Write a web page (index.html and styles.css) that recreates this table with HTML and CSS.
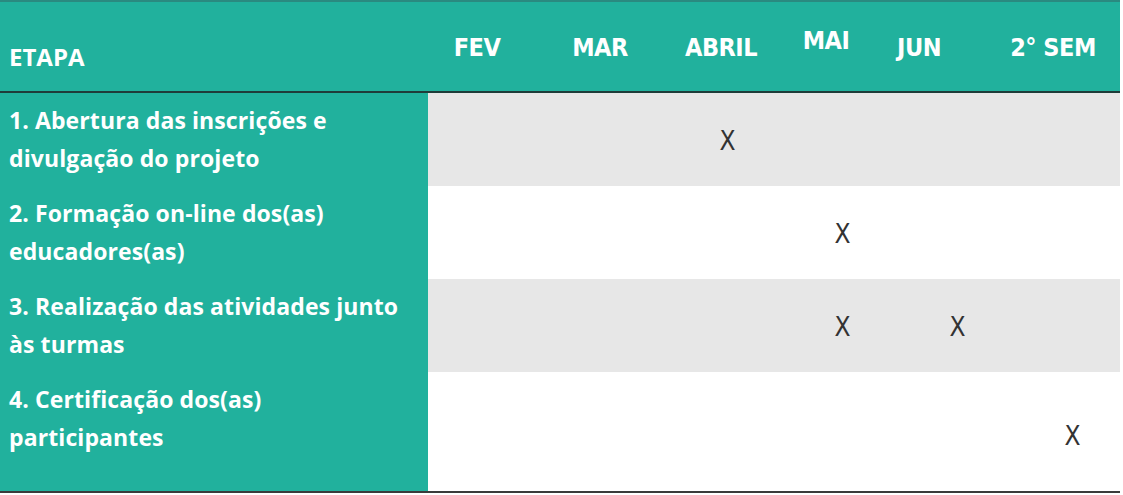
FILE: index.html
```html
<!DOCTYPE html>
<html lang="pt-BR">
<head>
<meta charset="utf-8">
<title>Cronograma</title>
<link rel="stylesheet" href="styles.css">
</head>
<body>
<div class="schedule">
  <div class="head">
    <div class="head-stage">ETAPA</div>
    <div class="month">FEV</div>
    <div class="month">MAR</div>
    <div class="month">ABRIL</div>
    <div class="month month-raised">MAI</div>
    <div class="month">JUN</div>
    <div class="month month-last">2° SEM</div>
  </div>
  <div class="row row-alt">
    <div class="stage">1. Abertura das inscrições e<br>divulgação do projeto</div>
    <div class="cell"></div>
    <div class="cell"></div>
    <div class="cell">X</div>
    <div class="cell"></div>
    <div class="cell"></div>
    <div class="cell cell-last"></div>
  </div>
  <div class="row">
    <div class="stage">2. Formação on-line dos(as)<br>educadores(as)</div>
    <div class="cell"></div>
    <div class="cell"></div>
    <div class="cell"></div>
    <div class="cell">X</div>
    <div class="cell"></div>
    <div class="cell cell-last"></div>
  </div>
  <div class="row row-alt">
    <div class="stage">3. Realização das atividades junto<br>às turmas</div>
    <div class="cell"></div>
    <div class="cell"></div>
    <div class="cell"></div>
    <div class="cell">X</div>
    <div class="cell">X</div>
    <div class="cell cell-last"></div>
  </div>
  <div class="row row-tall">
    <div class="stage">4. Certificação dos(as)<br>participantes</div>
    <div class="cell"></div>
    <div class="cell"></div>
    <div class="cell"></div>
    <div class="cell"></div>
    <div class="cell"></div>
    <div class="cell cell-last">X</div>
  </div>
</div>
</body>
</html>
```
FILE: styles.css
```css
* { box-sizing: border-box; }

html, body {
  margin: 0;
  padding: 0;
  background: #ffffff;
}

.schedule {
  width: 1120px;
  border-bottom: 2px solid #3a3b3b;
  font-family: "Open Sans", "Liberation Sans", sans-serif;
}

.head {
  display: grid;
  grid-template-columns: 428px 98px 148px 94px 116px 70px 166px;
  height: 93px;
  background: #21b19d;
  border-top: 2px solid #2a8a80;
  border-bottom: 2px solid #1f3c39;
  color: #ffffff;
  align-items: end;
}

.head-stage {
  padding: 0 0 19px 9px;
  font-size: 24px;
  font-weight: 700;
  line-height: 30px;
}

.month {
  text-align: center;
  font-family: "Liberation Sans Narrow", "DejaVu Sans Condensed", sans-serif;
  font-weight: 700;
  font-size: 25px;
  letter-spacing: -0.5px;
  line-height: 30px;
  padding-bottom: 28px;
}

.month-raised {
  padding-bottom: 35px;
}

.month-last {
  padding-left: 32px;
}

.row {
  display: grid;
  grid-template-columns: 428px 121px 121px 115px 115px 115px 105px;
  height: 93px;
  background: #ffffff;
}

.row-alt {
  background: #e7e7e7;
}

.row-tall {
  height: 119px;
}

.stage {
  background: #21b19d;
  color: #ffffff;
  font-weight: 700;
  font-size: 23px;
  letter-spacing: 0.1px;
  line-height: 38px;
  padding: 8px 0 0 9px;
  white-space: nowrap;
}

.cell {
  display: flex;
  align-items: center;
  justify-content: center;
  padding-top: 3px;
  font-family: "Liberation Sans Narrow", "DejaVu Sans Condensed", sans-serif;
  font-size: 26px;
  color: #333333;
}

.row-tall .cell {
  padding-top: 9px;
}

.cell-last {
  padding-left: 10px;
}
```
